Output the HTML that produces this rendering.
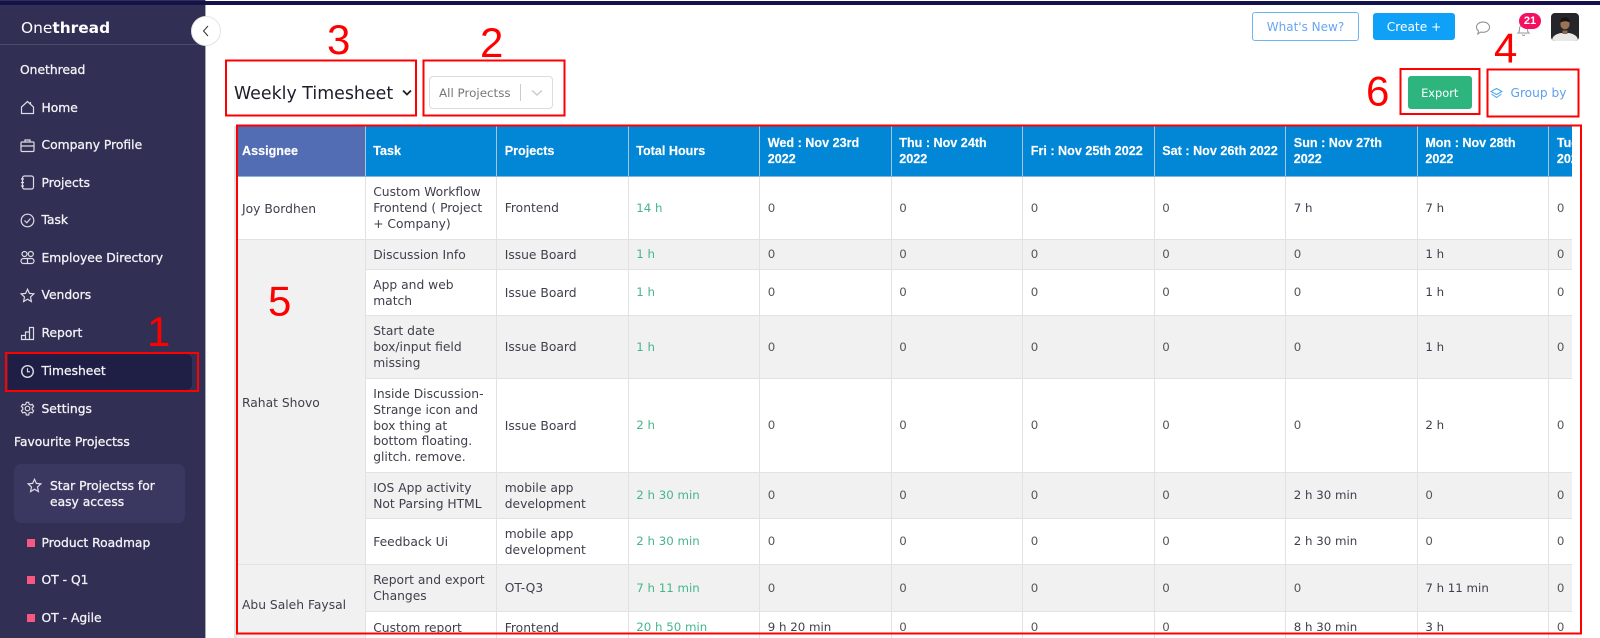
<!DOCTYPE html>
<html><head><meta charset="utf-8"><style>
*{box-sizing:border-box}
html,body{margin:0;padding:0;width:1600px;height:638px;overflow:hidden;background:#fff;font-family:"DejaVu Sans","Liberation Sans",sans-serif;color:#3a3a48}
.abs{position:absolute;white-space:nowrap}
#strip{position:absolute;left:0;top:1px;width:1600px;height:4px;background:#14124a;z-index:5}
#side{position:absolute;left:0;top:0;width:206px;height:638px;background:#312f53;border-right:1px solid #a9a9b8}
.m{position:absolute;left:41.5px;font-size:12.3px;line-height:18px;color:#f2f2f6;white-space:nowrap;font-weight:400;-webkit-text-stroke:.3px #f2f2f6}
.ic{position:absolute;left:20px;width:15px;height:15px;fill:none;stroke:#dcdce4;stroke-width:1.2}
.sq{position:absolute;left:27px;width:8px;height:8px;background:#f6587f}
#wrap{position:absolute;left:234px;top:126px;width:1338px;height:512px;overflow:hidden;border-left:3px solid #e4e4e4}
table{border-collapse:separate;border-spacing:0;table-layout:fixed;width:1444px;margin-left:0}
col{width:131.33px}
col.f{width:128.5px}
th{background:#0286d6;color:#fff;text-align:left;font-family:"Liberation Sans",sans-serif;font-size:12.6px;line-height:16px;font-weight:700;padding:0 0 0 7.5px;height:51px;border-right:1.5px solid #a9c4e2;border-bottom:1px solid #86b4e0;-webkit-text-stroke:.15px #fff}
th.a{background:#526db3;padding-left:5px}
td{font-size:12.3px;line-height:15.8px;padding:2px 0 0 7.5px;border-right:1.5px solid #e2e2e2;border-bottom:1.5px solid #e2e2e2;vertical-align:middle;color:#3f3f4c;white-space:nowrap;background:#fff}
tr.g td{background:#f1f1f1}
td.as{background:#f1f1f1;padding-left:5px;padding-top:3px}
td.w{background:#fff!important;padding-left:5px;padding-top:3px}
td.h{color:#45b68a;font-size:11.8px;padding-top:1px}
td.z{color:#555;font-size:11.8px;padding-top:1px}
td.n{font-size:11.8px;padding-top:1px}
svg text{font-family:"Liberation Sans",sans-serif;font-size:42px;fill:#f00}
</style></head><body>
<div id="strip"></div>

<div id="side">
<div class="abs" style="left:21px;top:18px;font-size:15.4px;line-height:20px;color:#fff">One<b>thread</b></div>
<div class="abs" style="left:0;top:44px;width:205px;height:1px;background:#4d4b6c"></div>
<div class="m" style="left:20px;top:61px">Onethread</div>

<svg class="ic" style="top:100px" viewBox="0 0 15 15"><path d="M1.500 7 7.500 1.500 13.500 7v6.500h-12zM10.500 2v3"/></svg>
<div class="m" style="top:99px">Home</div>
<svg class="ic" style="top:138px" viewBox="0 0 15 15"><rect x="1" y="4" width="13" height="9.500" rx="1"/><path d="M5 4V2h5v2M1 8h13"/></svg>
<div class="m" style="top:136px">Company Profile</div>
<svg class="ic" style="top:175px" viewBox="0 0 15 15"><rect x="2.500" y="1" width="11" height="13" rx="2"/><path d="M1 4h3M1 7.500h3M1 11h3"/></svg>
<div class="m" style="top:174px">Projects</div>
<svg class="ic" style="top:213px" viewBox="0 0 15 15"><circle cx="7.500" cy="7.500" r="6.300"/><path d="M4.500 7.500 6.800 9.800 10.500 5.500"/></svg>
<div class="m" style="top:211px">Task</div>
<svg class="ic" style="top:250px" viewBox="0 0 15 15"><circle cx="4.500" cy="4" r="2.500"/><circle cx="10.800" cy="4" r="2.500"/><rect x="1" y="8.500" width="13" height="5" rx="2.500"/><path d="M7.500 8.500v5"/></svg>
<div class="m" style="top:249px">Employee Directory</div>
<svg class="ic" style="top:288px" viewBox="0 0 15 15"><path d="M7.500 1.300 9.400 5.400 13.800 5.900 10.500 9 11.400 13.500 7.500 11.200 3.600 13.500 4.500 9 1.200 5.900 5.600 5.400z"/></svg>
<div class="m" style="top:286px">Vendors</div>
<svg class="ic" style="top:326px" viewBox="0 0 15 15"><path d="M1.500 13.500V9.500h4v4zM5.500 13.500V6h4v7.500zM9.500 13.500V1.500h4v12z"/></svg>
<div class="m" style="top:324px">Report</div>

<div class="abs" style="left:8px;top:354px;width:184px;height:36px;background:#1f1e44;border-radius:0 6px 6px 0"></div>
<svg class="ic" style="top:364px" viewBox="0 0 15 15"><circle cx="7.500" cy="7.500" r="5.800" stroke-width="1.400"/><path d="M7.500 4.300V7.800H10"/></svg>
<div class="m" style="top:362px">Timesheet</div>
<svg class="ic" style="top:401px" viewBox="0 0 15 15"><circle cx="7.500" cy="7.500" r="2.300"/><path d="M6.300 1.300h2.400l.4 1.900 1.500.8 1.800-.6 1.200 2.100-1.400 1.300v1.700l1.400 1.300-1.200 2.100-1.800-.6-1.500.8-.4 1.900H6.300l-.4-1.900-1.500-.8-1.800.6-1.200-2.100 1.400-1.300V6.800L1.400 5.500l1.200-2.100 1.800.6 1.500-.8z"/></svg>
<div class="m" style="top:400px">Settings</div>

<div class="m" style="left:14px;top:433px">Favourite Projectss</div>
<div class="abs" style="left:14px;top:464px;width:171px;height:59px;background:#3a3760;border-radius:7px"></div>
<svg class="ic" style="left:27px;top:478px" viewBox="0 0 15 15"><path d="M7.500 1.300 9.400 5.400 13.800 5.900 10.500 9 11.400 13.500 7.500 11.200 3.600 13.500 4.500 9 1.200 5.900 5.600 5.400z"/></svg>
<div class="m" style="left:50px;top:478px;line-height:16px">Star Projectss for<br>easy access</div>

<div class="sq" style="top:539px"></div><div class="m" style="top:534px">Product Roadmap</div>
<div class="sq" style="top:576px"></div><div class="m" style="top:571px">OT - Q1</div>
<div class="sq" style="top:614px"></div><div class="m" style="top:609px">OT - Agile</div>
</div>

<div class="abs" style="left:191px;top:16px;width:30px;height:30px;border-radius:50%;background:#fff;border:1px solid #e4e4e4;z-index:6"></div>
<svg class="abs" style="left:200px;top:25px;z-index:7" width="12" height="12" viewBox="0 0 12 12" fill="none" stroke="#333" stroke-width="1"><path d="M8 1 3.500 6 8 11"/></svg>

<!-- top bar -->
<div class="abs" style="left:1252px;top:12px;width:107px;height:29px;border:1px solid #6fb4f3;border-radius:3px;color:#6aa6ef;font-size:12px;line-height:28px;text-align:center">What's New?</div>
<div class="abs" style="left:1373px;top:13px;width:82px;height:27px;background:#0ea1f7;border-radius:3px;color:#fff;font-size:12.2px;line-height:28px;text-align:center">Create +</div>
<svg class="abs" style="left:1475px;top:20px" width="16" height="16" viewBox="0 0 16 16" fill="none" stroke="#8a8a8a" stroke-width="1"><path d="M8 2c3.700 0 6.500 2.300 6.500 5.200S11.700 12.300 8 12.300c-.8 0-1.500-.1-2.200-.3L2.800 14l.7-3C2.200 10 1.500 8.700 1.500 7.200 1.500 4.300 4.300 2 8 2z"/></svg>
<svg class="abs" style="left:1516px;top:22px" width="15" height="15" viewBox="0 0 15 15" fill="none" stroke="#999" stroke-width="1"><path d="M2 11c1.500-1 1.500-2.500 1.500-4.500a4 4 0 0 1 8 0c0 2 0 3.500 1.500 4.500zM6 12.500a1.600 1.600 0 0 0 3 0"/></svg>
<div class="abs" style="left:1519px;top:13px;width:22px;height:16px;border-radius:8px;background:#f5105f;color:#fff;font-family:'Liberation Sans',sans-serif;font-weight:700;font-size:11px;line-height:16px;text-align:center">21</div>
<svg class="abs" style="left:1551px;top:13px" width="28" height="28" viewBox="0 0 28 28"><defs><clipPath id="c"><rect width="28" height="28" rx="4"/></clipPath></defs><g clip-path="url(#c)"><rect width="28" height="28" fill="#26262a"/><path d="M1 28c0-5 4-7 9-8h8c5 1 9 3 9 8z" fill="#e8e8e6"/><rect x="11.500" y="15" width="5" height="6" fill="#8e6a52"/><ellipse cx="14" cy="11" rx="4.600" ry="5.800" fill="#9b7458"/><path d="M9.300 9.500C9.300 5.500 12 4.200 14.500 4.200s4.300 1.600 4.200 5.300C17 7.800 12 7.800 9.300 9.500z" fill="#17130f"/><path d="M10.500 14c1 3 6 3 7 0l-1 3.500h-5z" fill="#2e2420"/></g></svg>

<!-- controls -->
<div class="abs" style="left:234px;top:83px;font-size:17.400px;line-height:22px;color:#1d1d2b">Weekly Timesheet</div>
<svg class="abs" style="left:402px;top:89px" width="10" height="8" viewBox="0 0 10 8" fill="none" stroke="#222" stroke-width="1.800"><path d="M1 1.500 5 5.500 9 1.500"/></svg>
<div class="abs" style="left:429px;top:76px;width:124px;height:33px;border:1.500px solid #dcdcdc;border-radius:4px"></div>
<div class="abs" style="left:439px;top:85px;font-size:11.900px;line-height:17px;color:#777">All Projectss</div>
<div class="abs" style="left:520px;top:84px;width:1px;height:17px;background:#ccc"></div>
<svg class="abs" style="left:531px;top:89px" width="12" height="8" viewBox="0 0 12 8" fill="none" stroke="#ccc" stroke-width="1.500"><path d="M1 1.500 6 6 11 1.500"/></svg>

<div class="abs" style="left:1407.500px;top:76px;width:64.500px;height:33px;background:#2eb57d;border-radius:3px;color:#fff;font-size:11.400px;line-height:35px;text-align:center">Export</div>
<svg class="abs" style="left:1490px;top:87px" width="13" height="13" viewBox="0 0 13 13" fill="none" stroke="#4aa5ee" stroke-width="1"><path d="M6.500 1.500 12 4.500 6.500 7.500 1 4.500zM1.500 7 6.500 10.500 11.500 7"/></svg>
<div class="abs" style="left:1510.500px;top:84px;font-size:12.200px;line-height:18px;color:#5c9ef0">Group by</div>

<!-- table -->
<div id="wrap"><table>
<colgroup><col class="f"><col><col><col><col><col><col><col><col><col><col></colgroup>
<tr><th class="a">Assignee</th><th>Task</th><th>Projects</th><th>Total Hours</th><th>Wed : Nov 23rd<br>2022</th><th>Thu : Nov 24th<br>2022</th><th>Fri : Nov 25th 2022</th><th>Sat : Nov 26th 2022</th><th>Sun : Nov 27th<br>2022</th><th>Mon : Nov 28th<br>2022</th><th>Tue : Nov 29th<br>2022</th></tr>
<tr style="height:63px"><td class="w">Joy Bordhen</td><td>Custom Workflow<br>Frontend ( Project<br>+ Company)</td><td>Frontend</td><td class="h">14 h</td><td class="z">0</td><td class="z">0</td><td class="z">0</td><td class="z">0</td><td class="n">7 h</td><td class="n">7 h</td><td class="z">0</td></tr>
<tr class="g" style="height:30px"><td class="as" rowspan="6">Rahat Shovo</td><td>Discussion Info</td><td>Issue Board</td><td class="h">1 h</td><td class="z">0</td><td class="z">0</td><td class="z">0</td><td class="z">0</td><td class="z">0</td><td class="n">1 h</td><td class="z">0</td></tr>
<tr style="height:46px"><td>App and web<br>match</td><td>Issue Board</td><td class="h">1 h</td><td class="z">0</td><td class="z">0</td><td class="z">0</td><td class="z">0</td><td class="z">0</td><td class="n">1 h</td><td class="z">0</td></tr>
<tr class="g" style="height:63px"><td>Start date<br>box/input field<br>missing</td><td>Issue Board</td><td class="h">1 h</td><td class="z">0</td><td class="z">0</td><td class="z">0</td><td class="z">0</td><td class="z">0</td><td class="n">1 h</td><td class="z">0</td></tr>
<tr style="height:94px"><td>Inside Discussion-<br>Strange icon and<br>box thing at<br>bottom floating.<br>glitch. remove.</td><td>Issue Board</td><td class="h">2 h</td><td class="z">0</td><td class="z">0</td><td class="z">0</td><td class="z">0</td><td class="z">0</td><td class="n">2 h</td><td class="z">0</td></tr>
<tr class="g" style="height:46px"><td>IOS App activity<br>Not Parsing HTML</td><td>mobile app<br>development</td><td class="h">2 h 30 min</td><td class="z">0</td><td class="z">0</td><td class="z">0</td><td class="z">0</td><td class="n">2 h 30 min</td><td class="z">0</td><td class="z">0</td></tr>
<tr style="height:46px"><td>Feedback Ui</td><td>mobile app<br>development</td><td class="h">2 h 30 min</td><td class="z">0</td><td class="z">0</td><td class="z">0</td><td class="z">0</td><td class="n">2 h 30 min</td><td class="z">0</td><td class="z">0</td></tr>
<tr class="g" style="height:47px"><td class="as" rowspan="2">Abu Saleh Faysal</td><td>Report and export<br>Changes</td><td>OT-Q3</td><td class="h">7 h 11 min</td><td class="z">0</td><td class="z">0</td><td class="z">0</td><td class="z">0</td><td class="z">0</td><td class="n">7 h 11 min</td><td class="z">0</td></tr>
<tr style="height:32px"><td>Custom report</td><td>Frontend</td><td class="h">20 h 50 min</td><td class="n">9 h 20 min</td><td class="z">0</td><td class="z">0</td><td class="z">0</td><td class="n">8 h 30 min</td><td class="n">3 h</td><td class="z">0</td></tr>
</table></div>

<!-- annotations -->
<svg class="abs" style="left:0;top:0;z-index:10" width="1600" height="638" viewBox="0 0 1600 638" fill="none" stroke="#f00" stroke-width="2">
<rect x="6" y="353" width="192" height="38"/>
<rect x="226" y="60.500" width="190" height="55"/>
<rect x="423.500" y="60.500" width="141" height="55"/>
<rect x="1400.500" y="69" width="79" height="45"/>
<rect x="1487.500" y="69.500" width="91" height="47"/>
<rect x="237" y="125.500" width="1344" height="508"/>
<g stroke="none">
<text x="327" y="54">3</text>
<text x="480" y="57">2</text>
<text x="147" y="346">1</text>
<text x="1494" y="62.500">4</text>
<text x="268" y="315.500">5</text>
<text x="1366" y="105.500">6</text>
</g>
</svg>
</body></html>
